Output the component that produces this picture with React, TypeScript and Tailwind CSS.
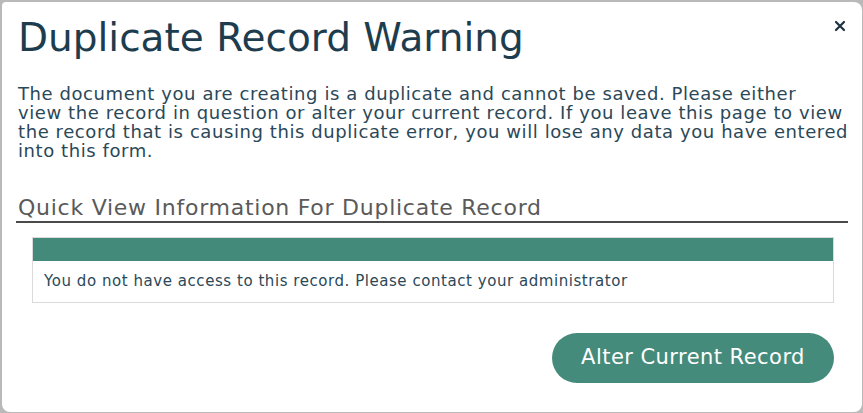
export default function App() {
  return (
    <div className="w-[863px] h-[413px] bg-[#b9b9b9] pt-[2px] pl-[2px] pr-[1px] pb-[1px]" style={{ fontFamily: '"DejaVu Sans", "Noto Sans", sans-serif' }}>
      <div className="relative w-full h-full bg-white rounded-[8px] rounded-tl-[4px] pl-[16px] pr-[14px] pt-[13px] flex flex-col">
        <button className="absolute right-[16px] top-[18px] w-[12px] h-[12px] text-[#1d3140]" aria-label="Close">
          <svg viewBox="0 0 12 12" className="w-[12px] h-[12px]">
            <path d="M2 2 L10 10 M10 2 L2 10" stroke="currentColor" strokeWidth="2.2" strokeLinecap="round" />
          </svg>
        </button>
        <h1 className="text-[39px] leading-[46px] text-[#1d3d4f] whitespace-nowrap">Duplicate Record Warning</h1>
        <p className="mt-[23px] text-[18px] leading-[19px] tracking-[0.58px] text-[#2b4858] whitespace-nowrap">
          The document you are creating is a duplicate and cannot be saved. Please either<br />
          view the record in question or alter your current record. If you leave this page to view<br />
          the record that is causing this duplicate error, you will lose any data you have entered<br />
          into this form.
        </p>
        <h2 className="mt-[35px] text-[22px] leading-[26px] tracking-[0.74px] text-[#5a5a5a] border-b-2 border-[#4a4a4a] -ml-[2px] pl-[2px] whitespace-nowrap">Quick View Information For Duplicate Record</h2>
        <div className="mt-[14px] ml-[14px] mr-[14px] border border-[#dadada]">
          <div className="h-[23px] bg-[#438a7a]" />
          <div className="h-[41px] flex items-center px-[11px] text-[15px] tracking-[0.55px] text-[#2b4858] whitespace-nowrap">You do not have access to this record. Please contact your administrator</div>
        </div>
        <div className="flex justify-end mr-[14px] mt-[30px]">
          <button className="h-[50px] w-[282px] rounded-full bg-[#458b7b] text-white text-[21px] tracking-[0.45px]">Alter Current Record</button>
        </div>
      </div>
    </div>
  );
}
